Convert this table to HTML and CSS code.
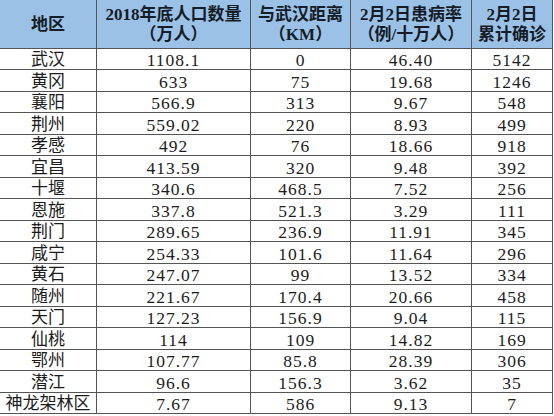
FILE: index.html
```html
<!DOCTYPE html>
<html lang="zh-CN">
<head>
<meta charset="utf-8">
<title>湖北各地区确诊数据</title>
<link rel="stylesheet" href="styles.css">
</head>
<body>
<div class="sheet">
  <div class="cell head">地区</div>
  <div class="cell head">2018年底人口数量<br>（万人）</div>
  <div class="cell head">与武汉距离<br>（KM）</div>
  <div class="cell head">2月2日患病率<br>（例/十万人）</div>
  <div class="cell head">2月2日<br>累计确诊</div>

  <div class="cell">武汉</div><div class="cell">1108.1</div><div class="cell">0</div><div class="cell">46.40</div><div class="cell">5142</div>
  <div class="cell">黄冈</div><div class="cell">633</div><div class="cell">75</div><div class="cell">19.68</div><div class="cell">1246</div>
  <div class="cell">襄阳</div><div class="cell">566.9</div><div class="cell">313</div><div class="cell">9.67</div><div class="cell">548</div>
  <div class="cell">荆州</div><div class="cell">559.02</div><div class="cell">220</div><div class="cell">8.93</div><div class="cell">499</div>
  <div class="cell">孝感</div><div class="cell">492</div><div class="cell">76</div><div class="cell">18.66</div><div class="cell">918</div>
  <div class="cell">宜昌</div><div class="cell">413.59</div><div class="cell">320</div><div class="cell">9.48</div><div class="cell">392</div>
  <div class="cell">十堰</div><div class="cell">340.6</div><div class="cell">468.5</div><div class="cell">7.52</div><div class="cell">256</div>
  <div class="cell">恩施</div><div class="cell">337.8</div><div class="cell">521.3</div><div class="cell">3.29</div><div class="cell">111</div>
  <div class="cell">荆门</div><div class="cell">289.65</div><div class="cell">236.9</div><div class="cell">11.91</div><div class="cell">345</div>
  <div class="cell">咸宁</div><div class="cell">254.33</div><div class="cell">101.6</div><div class="cell">11.64</div><div class="cell">296</div>
  <div class="cell">黄石</div><div class="cell">247.07</div><div class="cell">99</div><div class="cell">13.52</div><div class="cell">334</div>
  <div class="cell">随州</div><div class="cell">221.67</div><div class="cell">170.4</div><div class="cell">20.66</div><div class="cell">458</div>
  <div class="cell">天门</div><div class="cell">127.23</div><div class="cell">156.9</div><div class="cell">9.04</div><div class="cell">115</div>
  <div class="cell">仙桃</div><div class="cell">114</div><div class="cell">109</div><div class="cell">14.82</div><div class="cell">169</div>
  <div class="cell">鄂州</div><div class="cell">107.77</div><div class="cell">85.8</div><div class="cell">28.39</div><div class="cell">306</div>
  <div class="cell">潜江</div><div class="cell">96.6</div><div class="cell">156.3</div><div class="cell">3.62</div><div class="cell">35</div>
  <div class="cell">神龙架林区</div><div class="cell">7.67</div><div class="cell">586</div><div class="cell">9.13</div><div class="cell">7</div>
</div>
</body>
</html>
```
FILE: styles.css
```css
html, body {
  margin: 0;
  padding: 0;
  background: #ffffff;
}

.sheet {
  display: grid;
  grid-template-columns: 97px 154px 100px 121px 81px;
  grid-template-rows: 49px repeat(8, 21px 22px) 21px;
  width: 553px;
  font-family: "Liberation Serif", "Noto Sans CJK SC", serif;
  font-size: 17px;
  color: #1c1c1c;
}

.cell {
  box-sizing: border-box;
  border-right: 1px solid #555555;
  border-bottom: 1px solid #555555;
  display: flex;
  align-items: center;
  justify-content: center;
  text-align: center;
  line-height: 20px;
  padding-top: 2px;
  white-space: nowrap;
}

/* numeric data columns: slightly wider spacing like the original spreadsheet font */
.cell:not(.head):not(:nth-child(5n+1)) {
  letter-spacing: 1px;
  font-size: 17.5px;
}

.head {
  background: #9bc2e6;
  font-weight: 700;
  color: #141c28;
  padding-top: 1px;
}
```
